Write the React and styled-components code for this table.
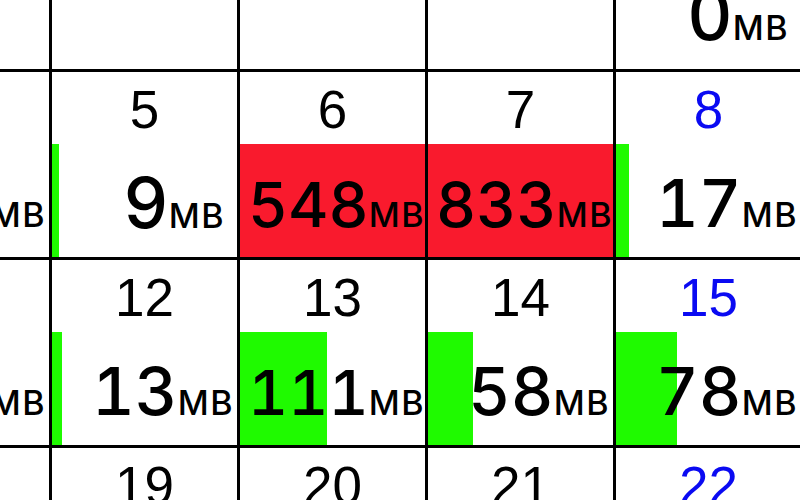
import React from "react";
import styled, { createGlobalStyle } from "styled-components";

const CELL = 185;
const LIMIT = 236;

const GlobalStyle = createGlobalStyle`
  html, body {
    margin: 0;
    background: #fff;
    overflow: hidden;
  }
`;

const Viewport = styled.div`
  width: 800px;
  height: 500px;
  overflow: hidden;
  background: #fff;
  font-family: "Liberation Sans", Arial, sans-serif;
`;

const Grid = styled.div`
  display: grid;
  grid-template-columns: repeat(5, ${CELL}px);
  grid-auto-rows: ${CELL}px;
  gap: 3px;
  width: max-content;
  background: #000;
  margin: -116px 0 0 -136px;
`;

const Cell = styled.div`
  position: relative;
  display: flex;
  flex-direction: column;
  background: #fff;
  overflow: hidden;
`;

const Bar = styled.div`
  position: absolute;
  left: 0;
  bottom: 0;
  height: 113px;
  background: ${(p) => (p.$over ? "#f91a2d" : "#1ffa00")};
`;

const DateLabel = styled.div`
  position: relative;
  margin-top: 11px;
  height: 53px;
  font-size: 53px;
  line-height: 53px;
  text-align: center;
  color: ${(p) => (p.$saturday ? "#0a0af2" : "#000")};
`;

// number shrinks to fit as it gets longer
const numSize = { 1: 70, 2: 66, 3: 62 };
const tailPad = { 1: 12, 2: 3, 3: 0 };

const Usage = styled.div`
  position: relative;
  margin-top: 32px;
  height: 68px;
  font-family: Inter, "Liberation Sans", sans-serif;
  font-weight: 500;
  font-size: 68px;
  line-height: 68px;
  font-variant-numeric: tabular-nums;
  text-align: right;
  white-space: nowrap;
  color: #000;
  padding-right: ${(p) => tailPad[p.$digits] ?? 0}px;
`;

const Num = styled.span`
  font-size: ${(p) => numSize[p.$digits] ?? 62}px;
  line-height: 1;
`;

const Unit = styled.span`
  font-size: 34px;
  line-height: 1;
  letter-spacing: 1.5px;
`;

// columns: Tue .. Sat
const weeks = [
  [null, null, null, null, { d: 1, v: 0 }],
  [{ d: 4, v: 24 }, { d: 5, v: 9 }, { d: 6, v: 548 }, { d: 7, v: 833 }, { d: 8, v: 17 }],
  [{ d: 11, v: 36 }, { d: 12, v: 13 }, { d: 13, v: 111 }, { d: 14, v: 58 }, { d: 15, v: 78 }],
  [{ d: 18, v: 42 }, { d: 19, v: 20 }, { d: 20, v: 64 }, { d: 21, v: 33 }, { d: 22, v: 51 }],
];

const DayCell = ({ day, saturday }) => {
  if (!day) return <Cell />;
  const over = day.v > LIMIT;
  const width = over ? CELL : Math.round((day.v / LIMIT) * CELL);
  const digits = String(day.v).length;
  return (
    <Cell>
      {width > 0 && <Bar $over={over} style={{ width }} />}
      <DateLabel $saturday={saturday}>{day.d}</DateLabel>
      <Usage $digits={digits}>
        <Num $digits={digits}>{day.v}</Num>
        <Unit>MB</Unit>
      </Usage>
    </Cell>
  );
};

const App = () => (
  <Viewport>
    <GlobalStyle />
    <Grid>
      {weeks.map((week, w) =>
        week.map((day, i) => (
          <DayCell key={`${w}-${i}`} day={day} saturday={i === 4} />
        ))
      )}
    </Grid>
  </Viewport>
);

export default App;
